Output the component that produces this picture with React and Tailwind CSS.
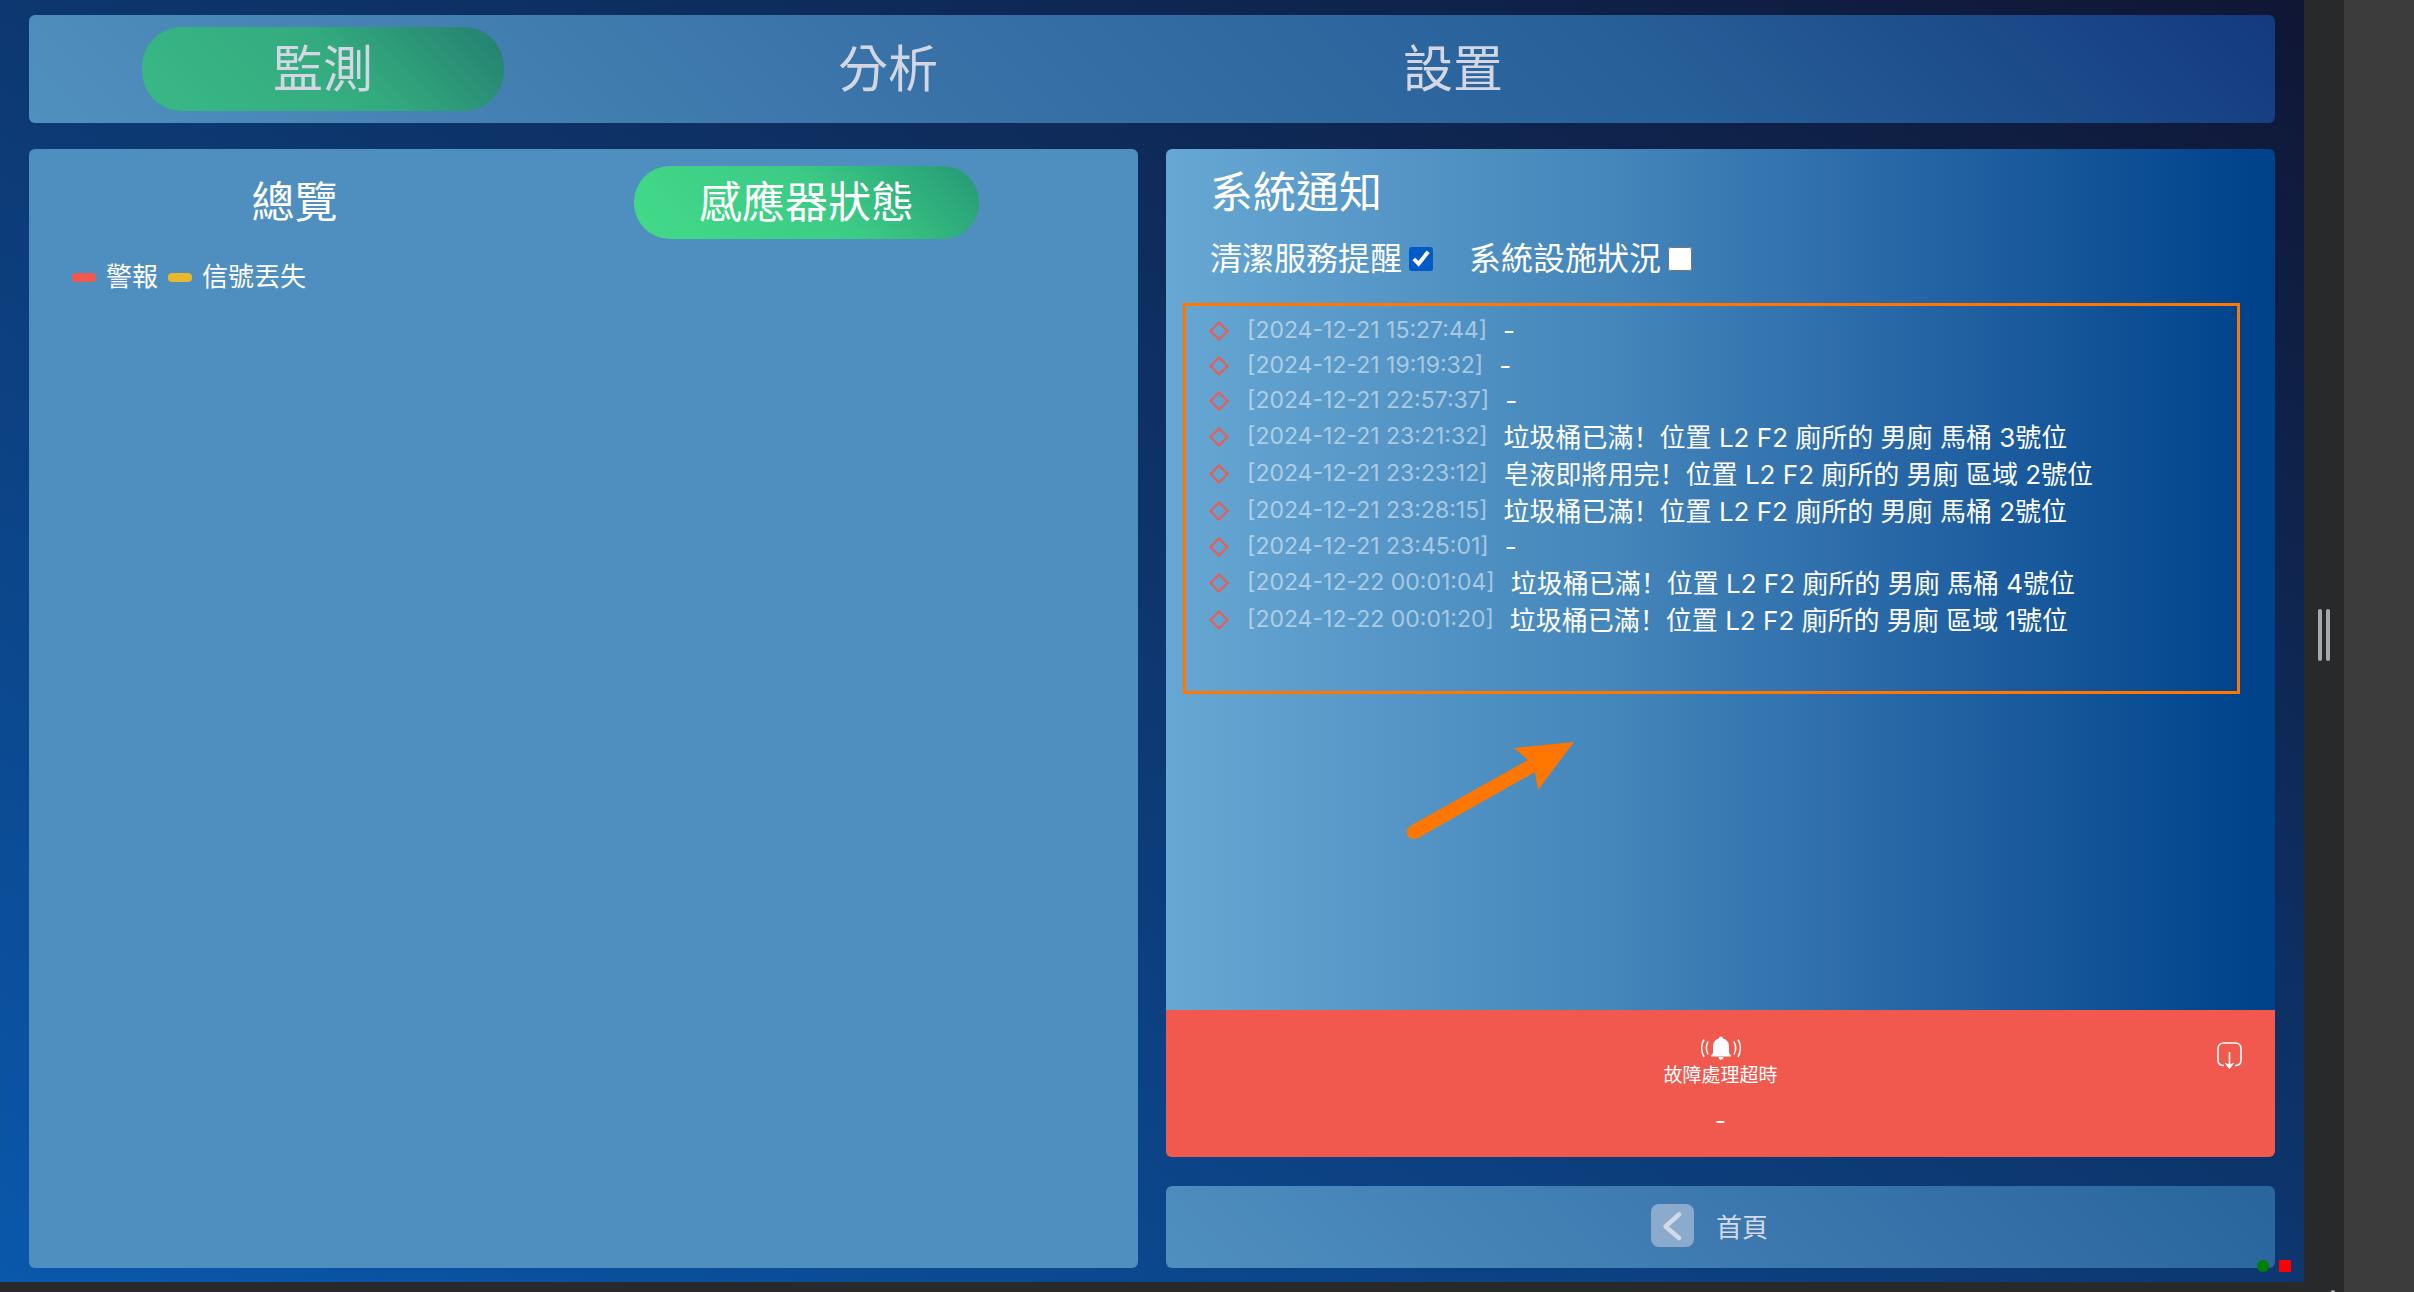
const FONT = "font-[Inter,'Noto_Sans_CJK_TC',sans-serif]";

const mainTabs = [
  { label: "監測", active: true },
  { label: "分析", active: false },
  { label: "設置", active: false },
];

const sensorTabs = [
  { label: "總覽", active: false },
  { label: "感應器狀態", active: true },
];

const notices = [
  { time: "2024-12-21 15:27:44", text: "-" },
  { time: "2024-12-21 19:19:32", text: "-" },
  { time: "2024-12-21 22:57:37", text: "-" },
  { time: "2024-12-21 23:21:32", title: "垃圾桶已滿", text: "位置 L2 F2 廁所的 男廁 馬桶 3號位" },
  { time: "2024-12-21 23:23:12", title: "皂液即將用完", text: "位置 L2 F2 廁所的 男廁 區域 2號位" },
  { time: "2024-12-21 23:28:15", title: "垃圾桶已滿", text: "位置 L2 F2 廁所的 男廁 馬桶 2號位" },
  { time: "2024-12-21 23:45:01", text: "-" },
  { time: "2024-12-22 00:01:04", title: "垃圾桶已滿", text: "位置 L2 F2 廁所的 男廁 馬桶 4號位" },
  { time: "2024-12-22 00:01:20", title: "垃圾桶已滿", text: "位置 L2 F2 廁所的 男廁 區域 1號位" },
];

function MainNav() {
  return (
    <nav className="flex h-[108px] items-center gap-[203px] rounded-md bg-[linear-gradient(45deg,#5090be_0%,#3a73a8_38%,#28619a_70%,#133a7e_100%)] pl-[113px]">
      {mainTabs.map((t) => (
        <button
          key={t.label}
          type="button"
          className={
            "h-[84px] w-[362px] rounded-[40px] text-[50px] leading-none text-[#d3d7e3] " +
            (t.active ? "bg-[linear-gradient(45deg,#39b986_0%,#34ab7f_55%,#237f6f_100%)]" : "")
          }
        >
          {t.label}
        </button>
      ))}
    </nav>
  );
}

function LegendItem({ color, label }) {
  return (
    <li className="flex items-center gap-[10px]">
      <span className={"h-[9px] w-6 rounded-[4px] " + color} />
      {label}
    </li>
  );
}

function SensorPanel() {
  return (
    <section className="flex-1 rounded-md bg-[#4f8fc0] pt-[17px] text-white">
      <div className="flex gap-[167px] pl-[93px]">
        {sensorTabs.map((t) => (
          <button
            key={t.label}
            type="button"
            className={
              "h-[73px] w-[345px] rounded-[36px] text-[43px] leading-none " +
              (t.active ? "bg-[linear-gradient(45deg,#43da89_0%,#3ccb85_55%,#259875_100%)]" : "")
            }
          >
            {t.label}
          </button>
        ))}
      </div>
      <ul className="mt-5 flex gap-[10px] pl-[43px] text-[26px] leading-9">
        <LegendItem color="bg-[#f1594e]" label="警報" />
        <LegendItem color="bg-[#e8b92e]" label="信號丟失" />
      </ul>
    </section>
  );
}

function Filter({ label, checked }) {
  return (
    <label className="flex items-center gap-[7px]">
      {label}
      <input type="checkbox" defaultChecked={checked} className="size-6 accent-[#005bc8]" />
    </label>
  );
}

function NoticeRow({ time, title, text }) {
  return (
    <li className={"flex items-center " + (title ? "h-[37px]" : "h-[35px]")}>
      <svg className="size-5 shrink-0" viewBox="0 0 20 20" fill="none" stroke="#ee5a50" strokeWidth="2">
        <path d="M10 1.5 18.5 10 10 18.5 1.5 10Z" />
      </svg>
      <time className="ml-[18px] text-[23px] text-white/50">[{time}]</time>
      <span className="ml-4 text-[26px] leading-[34px] whitespace-nowrap text-white">
        {title}
        {title && <span lang="zh-Hans" className="font-['Noto_Sans_CJK_SC',sans-serif]">！</span>}
        {text}
      </span>
    </li>
  );
}

function PointerArrow() {
  return (
    <svg className="absolute top-[741px] left-[1406px] h-[100px] w-[170px]" viewBox="0 0 170 100" fill="#ff7700">
      <path d="M168 1 108 7 122 19 6 84Q0 88 1 93 4 100 12 97L129 31 132 49Z" />
    </svg>
  );
}

function AlarmIcon() {
  return (
    <svg className="h-6 w-[42px]" viewBox="0 0 42 24" fill="none" stroke="white" strokeWidth="1.6">
      <path
        d="M21 0.5c1.3 0 2 .8 2 2 4 1 6 4 6 8v6.500l2 2.500v1H11v-1l2-2.500v-6.500c0-4 2-7 6-8 0-1.200.7-2 2-2zM18.500 21h5c0 1.500-1 2.700-2.500 2.700S18.500 22.500 18.500 21z"
        fill="white"
        stroke="none"
      />
      <path d="M8 5.500c-2 4-2 9 0 13M4 3.500c-3 5-3 12 0 17.500M34 5.500c2 4 2 9 0 13M38 3.500c3 5 3 12 0 17.500" />
    </svg>
  );
}

function AlarmPanel() {
  return (
    <div className="relative flex h-[147px] flex-col items-center bg-[#f1594e] pt-[26px] text-white">
      <AlarmIcon />
      <p className="mt-[2px] text-[19px] leading-7">故障處理超時</p>
      <p className="mt-[14px] text-2xl leading-[34px]">-</p>
      <button type="button" aria-label="收起" className="absolute top-8 right-8">
        <svg className="h-7 w-[27px]" viewBox="0 0 27 28" fill="none" stroke="white" strokeWidth="1.6">
          <path d="M8 23.500H7Q2 23 2 18V7Q2 1 8 1H19Q25 1 25 7V18Q25 23 20 23.500H19" />
          <path d="M13.500 10V24" />
          <path d="M9.500 21.500 13.500 23 17.500 21.500 13.500 26.500Z" fill="white" strokeWidth="1" />
        </svg>
      </button>
    </div>
  );
}

function NoticePanel() {
  return (
    <section className="flex flex-1 flex-col overflow-hidden rounded-md bg-[linear-gradient(90deg,#66a7d3_0%,#4586bb_40%,#2867a6_66%,#00438b_98%)] text-white">
      <h2 className="mt-3 pl-11 text-[43px] leading-[62px]">系統通知</h2>
      <div className="mt-3 flex gap-9 pl-11 text-[32px] leading-[48px]">
        <Filter label="清潔服務提醒" checked />
        <Filter label="系統設施狀況" checked={false} />
      </div>
      <ul className="mt-5 mr-[35px] ml-[17px] h-[391px] border-3 border-[#ff7700] pt-[7px] pl-[23px]">
        {notices.map((n) => (
          <NoticeRow key={n.time} {...n} />
        ))}
      </ul>
      <div className="flex-1" />
      <AlarmPanel />
    </section>
  );
}

function HomeBar() {
  return (
    <button
      type="button"
      className="flex h-[82px] items-center justify-center gap-[22px] rounded-md bg-[linear-gradient(45deg,#4f8fbf_0%,#3d79af_50%,#29659d_100%)] pr-[22px] pb-1 text-[26px] text-[#d3d9e6]"
    >
      <svg className="size-[43px]" viewBox="0 0 43 43" fill="none">
        <rect width="43" height="43" rx="8" fill="#8aabcc" />
        <path d="M28 10.500 14.500 22.500 28 34" stroke="#d3d9e6" strokeWidth="4.500" strokeLinecap="round" strokeLinejoin="round" />
      </svg>
      <span className="pt-1">首頁</span>
    </button>
  );
}

function StatusLights() {
  return (
    <div className="absolute right-[13px] bottom-[10px] flex gap-[10px]">
      <span className="size-3 rounded-full bg-[#008000]" />
      <span className="size-3 bg-[#ff0000]" />
    </div>
  );
}

export default function App() {
  return (
    <div lang="zh-Hant" className={"flex min-h-screen bg-[#28292a] " + FONT}>
      <div className="flex flex-1 flex-col">
        <div className="flex flex-1">
          <main className="relative flex flex-1 flex-col gap-[26px] bg-[linear-gradient(to_top_right,#0a58ab,#101634)] px-[29px] pt-[15px] pb-[14px]">
            <MainNav />
            <div className="flex flex-1 gap-7">
              <SensorPanel />
              <div className="flex flex-1 flex-col gap-[29px]">
                <NoticePanel />
                <HomeBar />
              </div>
            </div>
            <PointerArrow />
            <StatusLights />
          </main>
          <div className="flex w-10 items-center justify-center gap-1 pb-3">
            <span className="h-[52px] w-1 rounded-xs bg-[#a8a8a8]" />
            <span className="h-[52px] w-1 rounded-xs bg-[#a8a8a8]" />
          </div>
        </div>
        <div className="flex h-[10px] items-end justify-end pr-[9px]">
          <span className="h-[2px] w-1 rounded-t-full bg-[#b0b0b0]" />
        </div>
      </div>
      <aside className="w-[70px] bg-[#3c3c3c]" />
    </div>
  );
}
